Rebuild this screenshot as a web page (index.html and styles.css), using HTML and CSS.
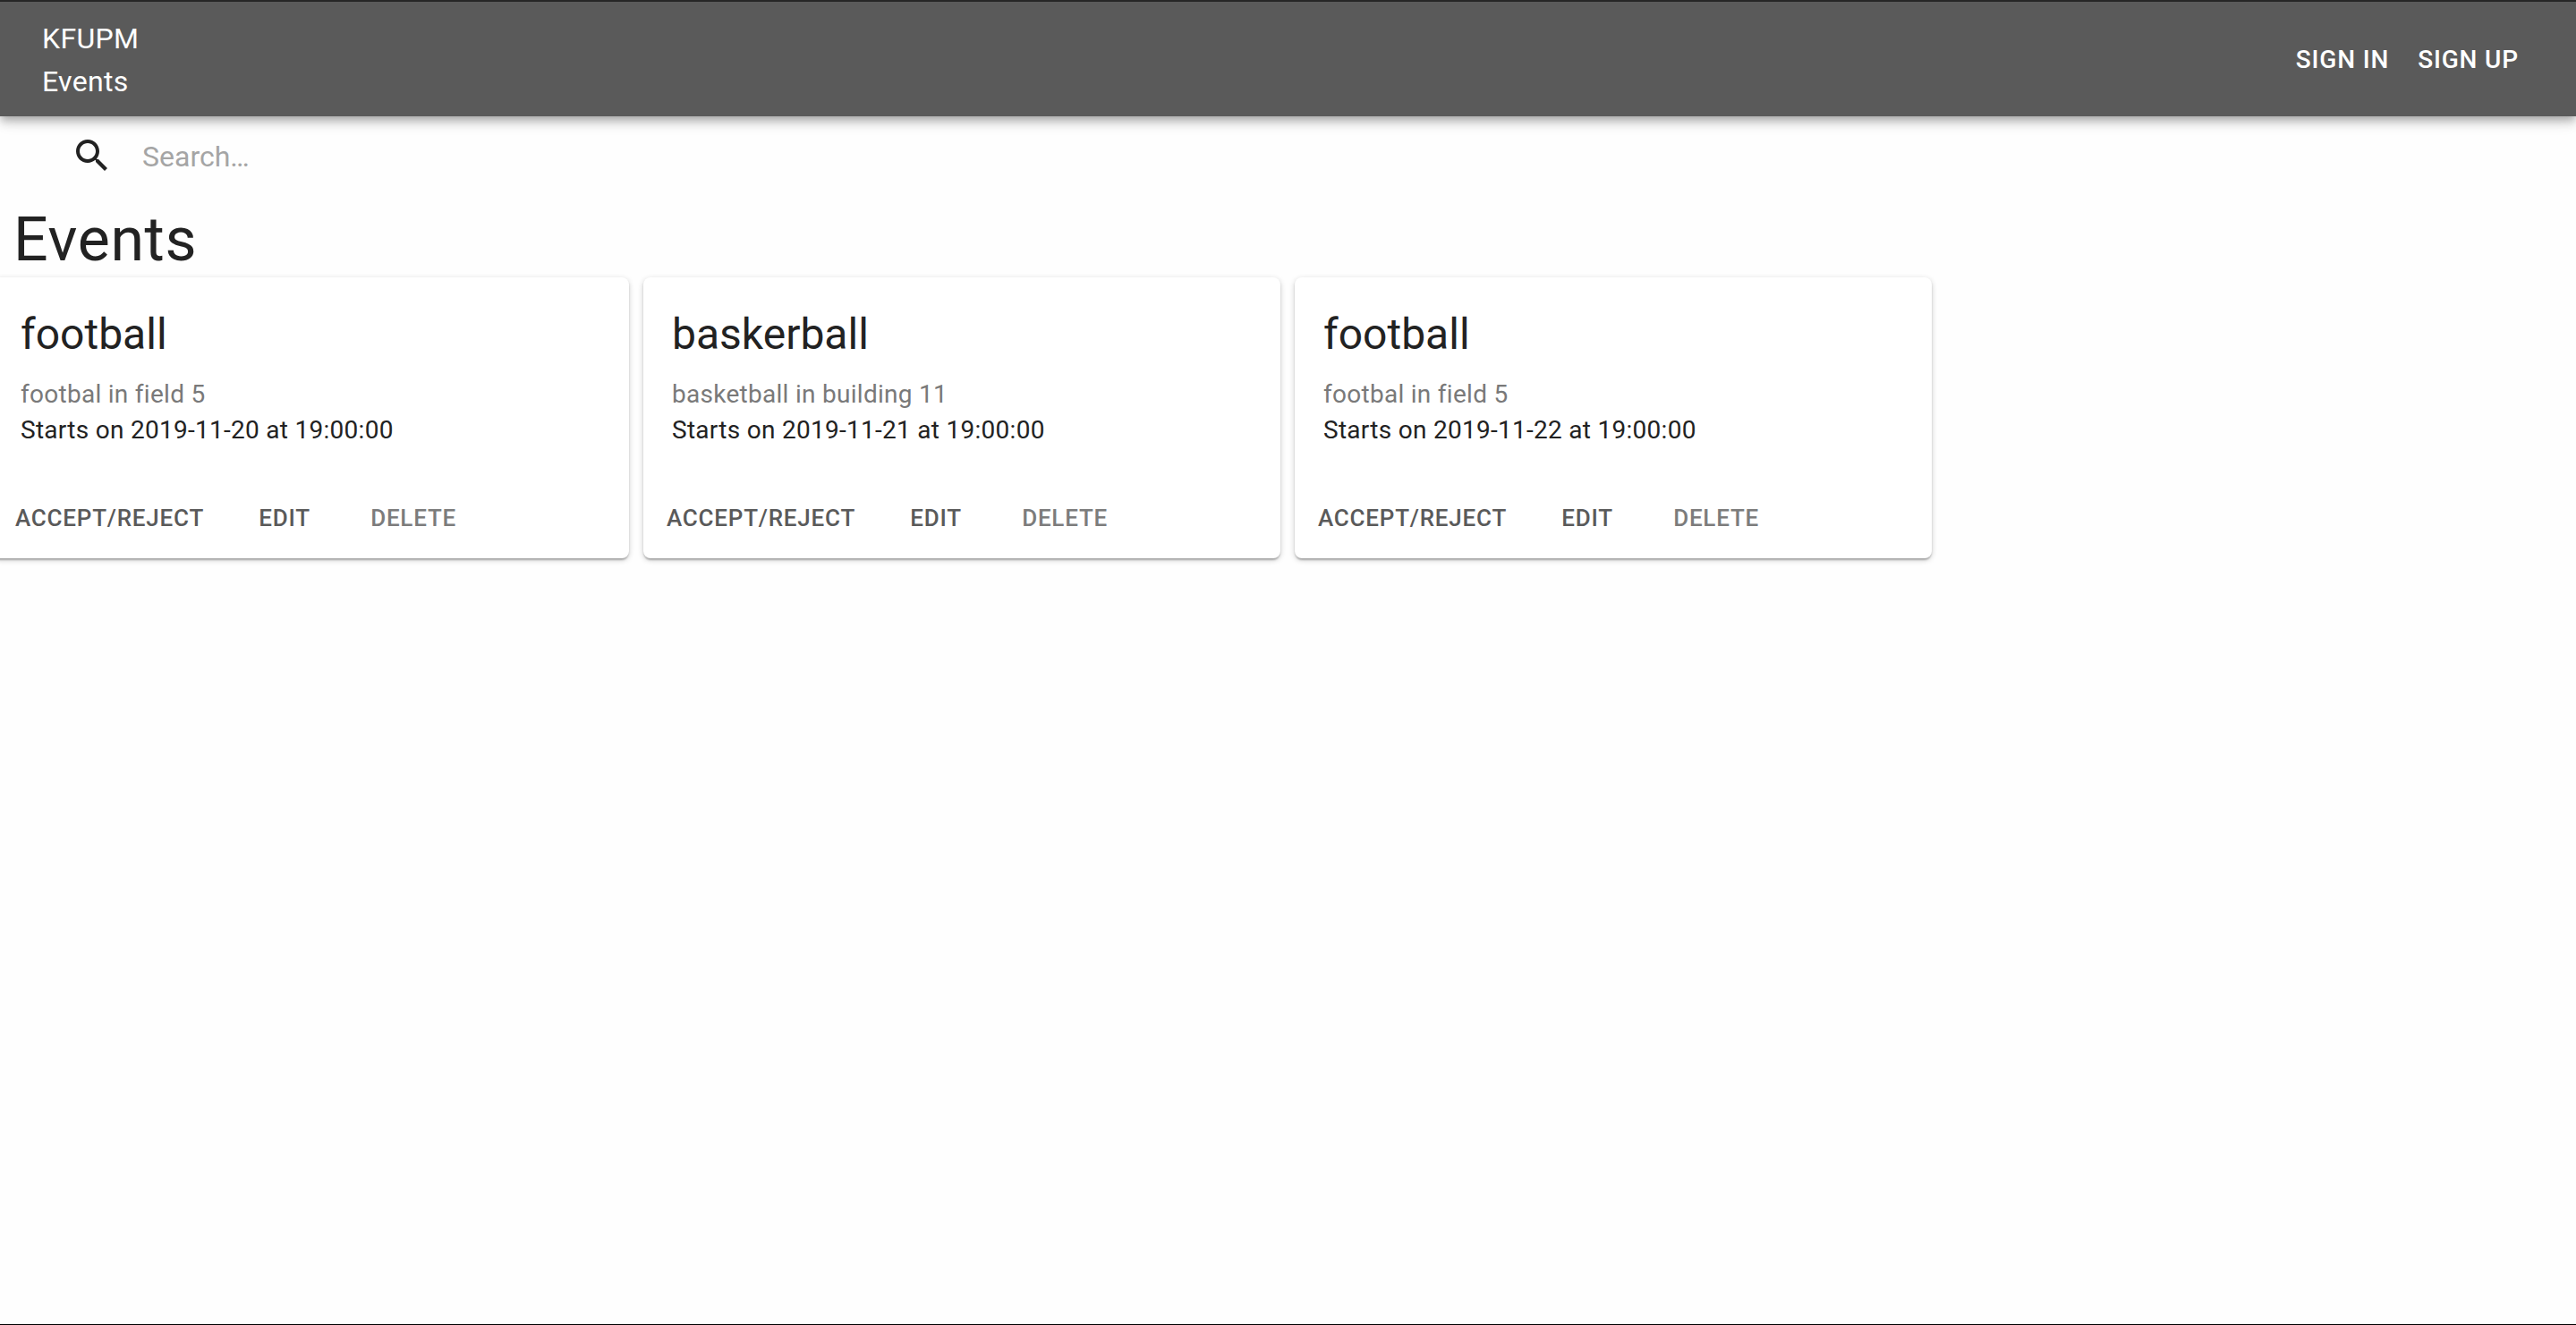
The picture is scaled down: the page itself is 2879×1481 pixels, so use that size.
FILE: index.html
```html
<!DOCTYPE html>
<html lang="en">
<head>
<meta charset="utf-8">
<meta name="viewport" content="width=device-width, initial-scale=1">
<title>KFUPM Events</title>
<link rel="stylesheet" href="styles.css">
</head>
<body>
<div class="page">
  <header class="app-bar">
    <a class="brand" href="#"><span>KFUPM</span><span>Events</span></a>
    <nav class="nav">
      <a class="nav-link" href="#">SIGN IN</a>
      <a class="nav-link" href="#">SIGN UP</a>
    </nav>
  </header>
  <label class="search">
    <svg class="search-icon" viewBox="0 0 24 24" aria-hidden="true"><path d="M15.5 14h-.79l-.28-.27C15.41 12.59 16 11.11 16 9.5 16 5.91 13.09 3 9.500 3S3 5.910 3 9.500 5.910 16 9.500 16c1.610 0 3.090-.59 4.230-1.570l.27.28v.79l5 4.990L20.490 19l-4.990-5zm-6 0C7.010 14 5 11.990 5 9.500S7.010 5 9.500 5 14 7.010 14 9.500 11.990 14 9.500 14z"/></svg>
    <input class="search-input" type="text" placeholder="Search…" aria-label="Search">
  </label>
  <main>
    <h1 class="heading">Events</h1>
    <div class="cards">
      <article class="card">
        <div class="card-content">
          <h2 class="card-title">football</h2>
          <p class="card-text muted">footbal in field 5</p>
          <p class="card-text">Starts on 2019-11-20 at 19:00:00</p>
        </div>
        <div class="card-actions">
          <button class="action" type="button">ACCEPT/REJECT</button>
          <button class="action" type="button">EDIT</button>
          <button class="action action-delete" type="button">DELETE</button>
        </div>
      </article>
      <article class="card">
        <div class="card-content">
          <h2 class="card-title">baskerball</h2>
          <p class="card-text muted">basketball in building 11</p>
          <p class="card-text">Starts on 2019-11-21 at 19:00:00</p>
        </div>
        <div class="card-actions">
          <button class="action" type="button">ACCEPT/REJECT</button>
          <button class="action" type="button">EDIT</button>
          <button class="action action-delete" type="button">DELETE</button>
        </div>
      </article>
      <article class="card">
        <div class="card-content">
          <h2 class="card-title">football</h2>
          <p class="card-text muted">footbal in field 5</p>
          <p class="card-text">Starts on 2019-11-22 at 19:00:00</p>
        </div>
        <div class="card-actions">
          <button class="action" type="button">ACCEPT/REJECT</button>
          <button class="action" type="button">EDIT</button>
          <button class="action action-delete" type="button">DELETE</button>
        </div>
      </article>
    </div>
  </main>
</div>
</body>
</html>
```
FILE: styles.css
```css
* {
  box-sizing: border-box;
}

body {
  margin: 0;
  background: #fefefe;
  color: #222;
  font-family: Roboto, "Liberation Sans", sans-serif;
}

.page {
  min-height: 100vh;
  overflow: hidden;
  border-top: 2px solid #262626;
  border-bottom: 1px solid #000;
}

.app-bar {
  display: flex;
  align-items: center;
  justify-content: space-between;
  min-height: 128px;
  padding: 17px 48px 15px 47px;
  background: #5a5a5a;
  box-shadow: 0 4px 8px -2px rgba(0, 0, 0, .2), 0 8px 10px 0 rgba(0, 0, 0, .14), 0 2px 20px 0 rgba(0, 0, 0, .12);
}

.brand {
  display: flex;
  flex-direction: column;
  color: #fff;
  font-size: 32px;
  line-height: 48px;
  letter-spacing: .01em;
  text-decoration: none;
}

.nav {
  display: flex;
}

.nav-link {
  padding: 12px 16px;
  color: #fff;
  font-size: 28px;
  font-weight: 500;
  line-height: 48px;
  letter-spacing: .03em;
  text-decoration: none;
}

.search {
  display: flex;
  align-items: center;
  gap: 32px;
  height: 88px;
  padding: 0 48px 0 79px;
}

.search-icon {
  width: 48px;
  height: 48px;
  fill: #222;
}

.search-input {
  flex: 1;
  padding: 17px 0 15px;
  border: 0;
  outline: 0;
  background: transparent;
  color: #222;
  font: 400 32px/38px Roboto, "Liberation Sans", sans-serif;
}

.search-input::placeholder {
  color: #a5a5a5;
  opacity: 1;
}

.heading {
  margin: 12px 0 4px;
  padding: 0 15px;
  font-size: 68px;
  font-weight: 400;
  line-height: 76px;
  letter-spacing: .01em;
}

.cards {
  display: grid;
  grid-template-columns: repeat(4, 1fr);
  gap: 16px;
  margin: 0 -8px 0 -9px;
}

.card {
  border-radius: 8px;
  background: #fff;
  box-shadow: 0 2px 6px 0 rgba(0, 0, 0, .2), 0 2px 2px 0 rgba(0, 0, 0, .14), 0 4px 2px -2px rgba(0, 0, 0, .12);
}

.card-content {
  padding: 32px;
}

.card-title {
  margin: 0 0 15px;
  font-size: 48px;
  font-weight: 400;
  line-height: 64px;
}

.card-text {
  margin: 0;
  font-size: 28px;
  line-height: 40px;
  letter-spacing: .01em;
}

.muted {
  color: #797979;
}

.card-actions {
  display: flex;
  gap: 16px;
  padding: 16px 16px 15px;
}

.action {
  min-width: 128px;
  padding: 8px 10px;
  border: 0;
  background: transparent;
  color: #5a5a5a;
  font: 500 26px/44px Roboto, "Liberation Sans", sans-serif;
  letter-spacing: .03em;
}

.action-delete {
  color: #7c7c7c;
}
```
